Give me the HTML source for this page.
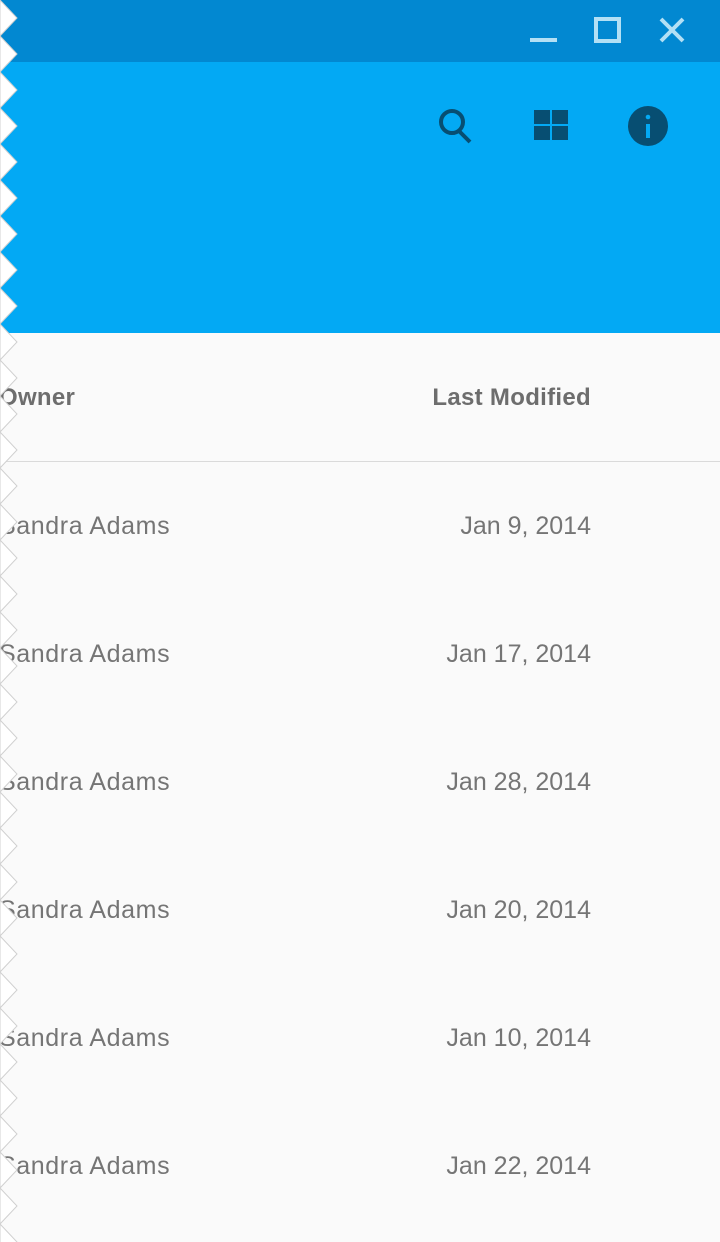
<!DOCTYPE html>
<html><head><style>
body{margin:0;width:720px;height:1242px;overflow:hidden;background:#FAFAFA;font-family:"Liberation Sans",sans-serif;position:relative}
.tb{position:absolute;left:0;top:0;width:720px;height:62px;background:#0288D1}
.hd{position:absolute;left:0;top:62px;width:720px;height:271px;background:#03A9F4}
.t{position:absolute;font-size:25px;color:#757575;line-height:1;white-space:nowrap}
.l{left:-1px;letter-spacing:0.6px}.r{right:129px;text-align:right}
.h{font-weight:bold;color:#6d6d6d;font-size:24px;letter-spacing:0.3px}
</style></head><body>
<div class="tb"></div><div class="hd"></div>
<svg style="position:absolute;left:0;top:0" width="720" height="333">
<g stroke="#B3E0F5" stroke-width="4" fill="none">
<line x1="530" y1="40" x2="557" y2="40"/>
<rect x="596" y="19" width="23" height="22"/>
<line x1="661" y1="19" x2="683" y2="41"/><line x1="683" y1="19" x2="661" y2="41"/>
</g>
<g fill="#074E72" stroke="#074E72">
<circle cx="452" cy="122" r="11" fill="none" stroke-width="4"/>
<line x1="459" y1="131" x2="470" y2="142" stroke-width="4"/>
<rect x="534" y="110" width="16" height="14" stroke="none"/><rect x="552" y="110" width="16" height="14" stroke="none"/>
<rect x="534" y="126" width="16" height="14" stroke="none"/><rect x="552" y="126" width="16" height="14" stroke="none"/>
<ellipse cx="648" cy="126" rx="20" ry="20" stroke="none"/>
</g>
<rect x="646" y="124" width="4" height="14" fill="#03A9F4"/><circle cx="648" cy="117" r="2.3" fill="#03A9F4"/>
</svg>
<div style="position:absolute;left:0;top:461px;width:720px;height:1px;background:#DADADA"></div>
<div class="t l h" style="top:386px">Owner</div>
<div class="t r h" style="top:386px">Last Modified</div>
<div class="t l" style="top:514px">Sandra Adams</div><div class="t r" style="top:514px">Jan 9, 2014</div>
<div class="t l" style="top:642px">Sandra Adams</div><div class="t r" style="top:642px">Jan 17, 2014</div>
<div class="t l" style="top:770px">Sandra Adams</div><div class="t r" style="top:770px">Jan 28, 2014</div>
<div class="t l" style="top:898px">Sandra Adams</div><div class="t r" style="top:898px">Jan 20, 2014</div>
<div class="t l" style="top:1026px">Sandra Adams</div><div class="t r" style="top:1026px">Jan 10, 2014</div>
<div class="t l" style="top:1154px">Sandra Adams</div><div class="t r" style="top:1154px">Jan 22, 2014</div>
<svg style="position:absolute;left:0;top:0" width="24" height="1242" id="z"></svg>
<script>
var s='M0,0 ';for(var y=0;y<1250;y+=36){s+='L17,'+(y+18)+' L0,'+(y+36)+' ';}
document.getElementById('z').innerHTML='<path d="'+s+'Z" fill="#fff" stroke="#D0D0D0" stroke-width="1"/>';
</script>
</body></html>
